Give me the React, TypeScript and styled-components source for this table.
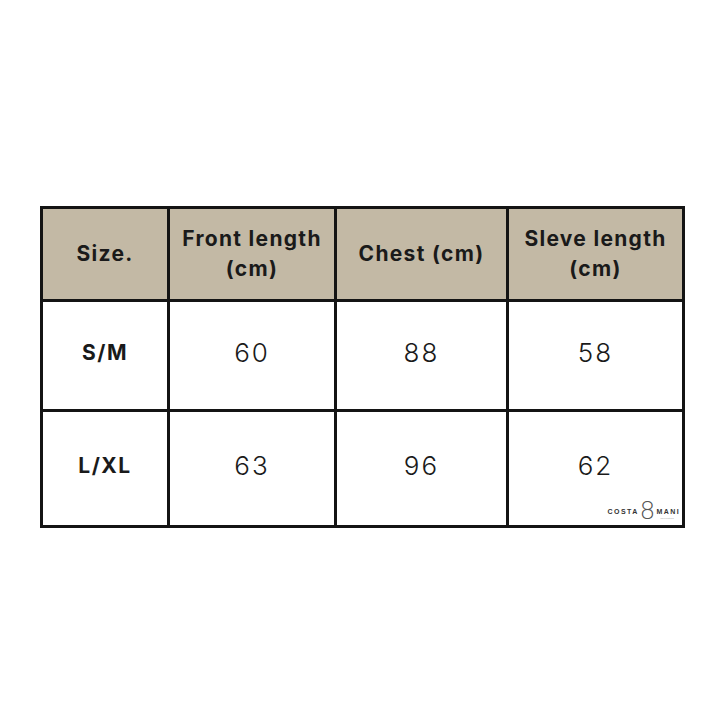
import React from "react"
import styled, { createGlobalStyle } from "styled-components"

const GlobalStyle = createGlobalStyle`
  html, body {
    margin: 0;
    padding: 0;
    background: #ffffff;
  }
  body {
    font-family: Inter, "Noto Sans", "Liberation Sans", sans-serif;
    color: #111111;
  }
`

const Page = styled.div`
  width: 720px;
  height: 720px;
  padding: 206px 0 0 40px;
  box-sizing: border-box;
`

const Table = styled.div`
  position: relative;
  display: grid;
  grid-template-columns: 124px 164px 169px 173px;
  grid-template-rows: 90px 107px 113px;
  gap: 3px;
  padding: 3px;
  width: max-content;
  background: #141414;
`

const Cell = styled.div<{ $head?: boolean; $label?: boolean }>`
  display: flex;
  align-items: center;
  justify-content: center;
  text-align: center;
  padding-bottom: ${(p) => (p.$head ? "0" : "5px")};
  background: ${(p) => (p.$head ? "#c3b9a5" : "#ffffff")};
  font-size: ${(p) => (p.$head ? "21px" : p.$label ? "21px" : "26px")};
  font-weight: ${(p) => (p.$head || p.$label ? 700 : 300)};
  line-height: 30px;
  color: #1a1a1a;
  letter-spacing: ${(p) => (p.$head ? "1.3px" : p.$label ? "1.5px" : "2px")};
`

const Logo = styled.div`
  position: absolute;
  right: 5px;
  bottom: 6px;
  display: flex;
  align-items: center;
  gap: 1px;
  font-family: "Liberation Sans", sans-serif;
  font-weight: 700;
  font-size: 7px;
  letter-spacing: 1.4px;
  color: #333333;
`

const Eight = styled.span`
  font-family: "DejaVu Sans", sans-serif;
  font-weight: 200;
  font-size: 25px;
  line-height: 22px;
  letter-spacing: 0;
  color: #555555;
`

const Mani = styled.span`
  position: relative;
`

const Tag = styled.span`
  position: absolute;
  left: 4px;
  top: 9px;
  font-size: 2.5px;
  letter-spacing: 0.3px;
  font-weight: 400;
  color: #888888;
  white-space: nowrap;
`

const headers = ["Size.", "Front length\n(cm)", "Chest (cm)", "Sleve length\n(cm)"]
const rows = [
  ["S/M", "60", "88", "58"],
  ["L/XL", "63", "96", "62"],
]

const App: React.FC = () => (
  <>
    <GlobalStyle />
    <Page>
      <Table>
        {headers.map((h) => (
          <Cell key={h} $head>
            <span style={{ whiteSpace: "pre-line" }}>{h}</span>
          </Cell>
        ))}
        {rows.map((r) =>
          r.map((v, i) => (
            <Cell key={r[0] + i} $label={i === 0}>
              {v}
            </Cell>
          ))
        )}
        <Logo>
          <span>COSTA</span>
          <Eight>8</Eight>
          <Mani>
            MANI
            <Tag>collection</Tag>
          </Mani>
        </Logo>
      </Table>
    </Page>
  </>
)

export default App
